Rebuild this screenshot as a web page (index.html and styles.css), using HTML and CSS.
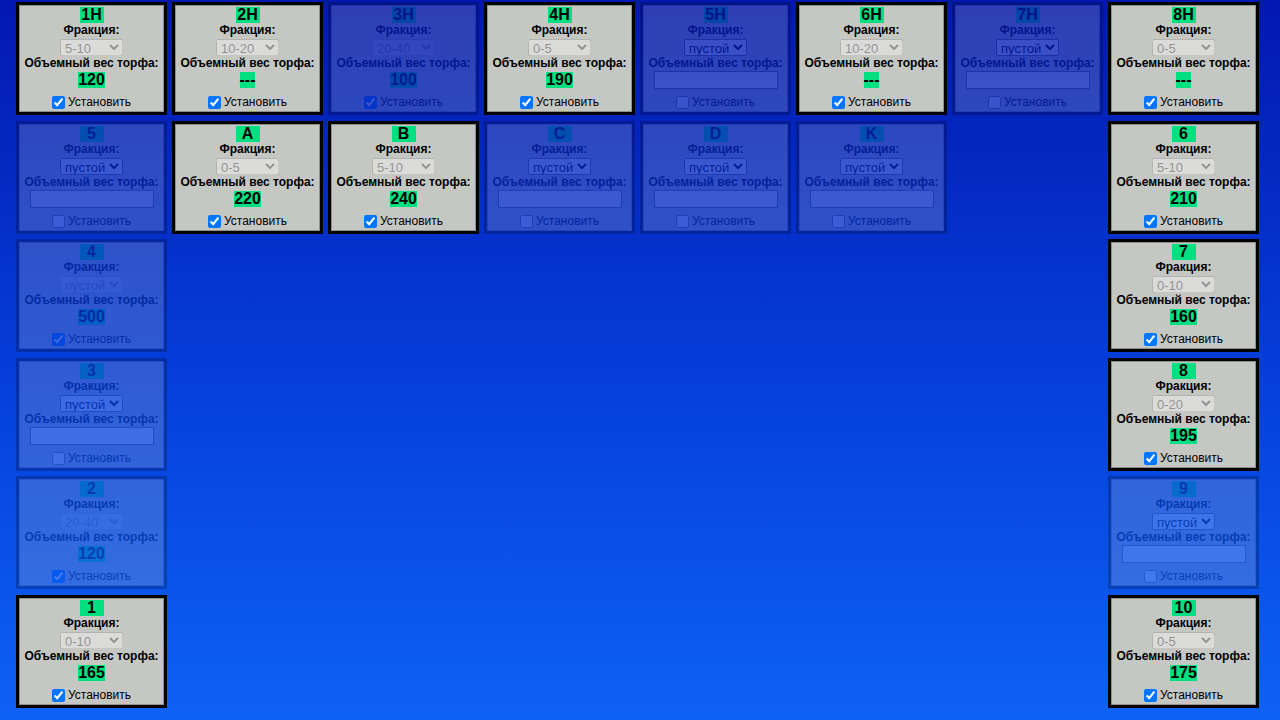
FILE: index.html
```html
<!DOCTYPE html>
<html lang="ru">
<head>
<meta charset="utf-8">
<title>Склад торфа</title>
<link rel="stylesheet" href="styles.css">
</head>
<body>
<main class="board">
  <!-- row 1 -->
  <div class="card"><div class="title">1H</div><div class="lbl">Фракция:</div>
    <select disabled><option>пустой</option><option>0-5</option><option>0-10</option><option selected>5-10</option><option>10-20</option><option>0-20</option><option>20-40</option></select>
    <div class="lbl lbl2">Объемный вес торфа:</div><div class="val">120</div>
    <label class="chk"><input type="checkbox" checked>Установить</label></div>

  <div class="card"><div class="title">2H</div><div class="lbl">Фракция:</div>
    <select disabled><option>пустой</option><option>0-5</option><option>0-10</option><option>5-10</option><option selected>10-20</option><option>0-20</option><option>20-40</option></select>
    <div class="lbl lbl2">Объемный вес торфа:</div><div class="val">---</div>
    <label class="chk"><input type="checkbox" checked>Установить</label></div>

  <div class="card dim"><div class="title">3H</div><div class="lbl">Фракция:</div>
    <select disabled><option>пустой</option><option>0-5</option><option>0-10</option><option>5-10</option><option>10-20</option><option>0-20</option><option selected>20-40</option></select>
    <div class="lbl lbl2">Объемный вес торфа:</div><div class="val">100</div>
    <label class="chk"><input type="checkbox" checked>Установить</label></div>

  <div class="card"><div class="title">4H</div><div class="lbl">Фракция:</div>
    <select disabled><option>пустой</option><option selected>0-5</option><option>0-10</option><option>5-10</option><option>10-20</option><option>0-20</option><option>20-40</option></select>
    <div class="lbl lbl2">Объемный вес торфа:</div><div class="val">190</div>
    <label class="chk"><input type="checkbox" checked>Установить</label></div>

  <div class="card dim"><div class="title">5H</div><div class="lbl">Фракция:</div>
    <select class="open"><option selected>пустой</option><option>0-5</option><option>0-10</option><option>5-10</option><option>10-20</option><option>0-20</option><option>20-40</option></select>
    <div class="lbl lbl2">Объемный вес торфа:</div><input class="field" type="text">
    <label class="chk"><input type="checkbox">Установить</label></div>

  <div class="card"><div class="title">6H</div><div class="lbl">Фракция:</div>
    <select disabled><option>пустой</option><option>0-5</option><option>0-10</option><option>5-10</option><option selected>10-20</option><option>0-20</option><option>20-40</option></select>
    <div class="lbl lbl2">Объемный вес торфа:</div><div class="val">---</div>
    <label class="chk"><input type="checkbox" checked>Установить</label></div>

  <div class="card dim"><div class="title">7H</div><div class="lbl">Фракция:</div>
    <select class="open"><option selected>пустой</option><option>0-5</option><option>0-10</option><option>5-10</option><option>10-20</option><option>0-20</option><option>20-40</option></select>
    <div class="lbl lbl2">Объемный вес торфа:</div><input class="field" type="text">
    <label class="chk"><input type="checkbox">Установить</label></div>

  <div class="card"><div class="title">8H</div><div class="lbl">Фракция:</div>
    <select disabled><option>пустой</option><option selected>0-5</option><option>0-10</option><option>5-10</option><option>10-20</option><option>0-20</option><option>20-40</option></select>
    <div class="lbl lbl2">Объемный вес торфа:</div><div class="val">---</div>
    <label class="chk"><input type="checkbox" checked>Установить</label></div>

  <!-- row 2 -->
  <div class="card dim left"><div class="title">5</div><div class="lbl">Фракция:</div>
    <select class="open"><option selected>пустой</option><option>0-5</option><option>0-10</option><option>5-10</option><option>10-20</option><option>0-20</option><option>20-40</option></select>
    <div class="lbl lbl2">Объемный вес торфа:</div><input class="field" type="text">
    <label class="chk"><input type="checkbox">Установить</label></div>

  <div class="card"><div class="title">A</div><div class="lbl">Фракция:</div>
    <select disabled><option>пустой</option><option selected>0-5</option><option>0-10</option><option>5-10</option><option>10-20</option><option>0-20</option><option>20-40</option></select>
    <div class="lbl lbl2">Объемный вес торфа:</div><div class="val">220</div>
    <label class="chk"><input type="checkbox" checked>Установить</label></div>

  <div class="card"><div class="title">B</div><div class="lbl">Фракция:</div>
    <select disabled><option>пустой</option><option>0-5</option><option>0-10</option><option selected>5-10</option><option>10-20</option><option>0-20</option><option>20-40</option></select>
    <div class="lbl lbl2">Объемный вес торфа:</div><div class="val">240</div>
    <label class="chk"><input type="checkbox" checked>Установить</label></div>

  <div class="card dim"><div class="title">C</div><div class="lbl">Фракция:</div>
    <select class="open"><option selected>пустой</option><option>0-5</option><option>0-10</option><option>5-10</option><option>10-20</option><option>0-20</option><option>20-40</option></select>
    <div class="lbl lbl2">Объемный вес торфа:</div><input class="field" type="text">
    <label class="chk"><input type="checkbox">Установить</label></div>

  <div class="card dim"><div class="title">D</div><div class="lbl">Фракция:</div>
    <select class="open"><option selected>пустой</option><option>0-5</option><option>0-10</option><option>5-10</option><option>10-20</option><option>0-20</option><option>20-40</option></select>
    <div class="lbl lbl2">Объемный вес торфа:</div><input class="field" type="text">
    <label class="chk"><input type="checkbox">Установить</label></div>

  <div class="card dim"><div class="title">K</div><div class="lbl">Фракция:</div>
    <select class="open"><option selected>пустой</option><option>0-5</option><option>0-10</option><option>5-10</option><option>10-20</option><option>0-20</option><option>20-40</option></select>
    <div class="lbl lbl2">Объемный вес торфа:</div><input class="field" type="text">
    <label class="chk"><input type="checkbox">Установить</label></div>

  <div class="card right"><div class="title">6</div><div class="lbl">Фракция:</div>
    <select disabled><option>пустой</option><option>0-5</option><option>0-10</option><option selected>5-10</option><option>10-20</option><option>0-20</option><option>20-40</option></select>
    <div class="lbl lbl2">Объемный вес торфа:</div><div class="val">210</div>
    <label class="chk"><input type="checkbox" checked>Установить</label></div>

  <!-- row 3 -->
  <div class="card dim left"><div class="title">4</div><div class="lbl">Фракция:</div>
    <select disabled><option selected>пустой</option><option>0-5</option><option>0-10</option><option>5-10</option><option>10-20</option><option>0-20</option><option>20-40</option></select>
    <div class="lbl lbl2">Объемный вес торфа:</div><div class="val">500</div>
    <label class="chk"><input type="checkbox" checked>Установить</label></div>

  <div class="card right"><div class="title">7</div><div class="lbl">Фракция:</div>
    <select disabled><option>пустой</option><option>0-5</option><option selected>0-10</option><option>5-10</option><option>10-20</option><option>0-20</option><option>20-40</option></select>
    <div class="lbl lbl2">Объемный вес торфа:</div><div class="val">160</div>
    <label class="chk"><input type="checkbox" checked>Установить</label></div>

  <!-- row 4 -->
  <div class="card dim left"><div class="title">3</div><div class="lbl">Фракция:</div>
    <select class="open"><option selected>пустой</option><option>0-5</option><option>0-10</option><option>5-10</option><option>10-20</option><option>0-20</option><option>20-40</option></select>
    <div class="lbl lbl2">Объемный вес торфа:</div><input class="field" type="text">
    <label class="chk"><input type="checkbox">Установить</label></div>

  <div class="card right"><div class="title">8</div><div class="lbl">Фракция:</div>
    <select disabled><option>пустой</option><option>0-5</option><option>0-10</option><option>5-10</option><option>10-20</option><option selected>0-20</option><option>20-40</option></select>
    <div class="lbl lbl2">Объемный вес торфа:</div><div class="val">195</div>
    <label class="chk"><input type="checkbox" checked>Установить</label></div>

  <!-- row 5 -->
  <div class="card dim left"><div class="title">2</div><div class="lbl">Фракция:</div>
    <select disabled><option>пустой</option><option>0-5</option><option>0-10</option><option>5-10</option><option>10-20</option><option>0-20</option><option selected>20-40</option></select>
    <div class="lbl lbl2">Объемный вес торфа:</div><div class="val">120</div>
    <label class="chk"><input type="checkbox" checked>Установить</label></div>

  <div class="card dim right"><div class="title">9</div><div class="lbl">Фракция:</div>
    <select class="open"><option selected>пустой</option><option>0-5</option><option>0-10</option><option>5-10</option><option>10-20</option><option>0-20</option><option>20-40</option></select>
    <div class="lbl lbl2">Объемный вес торфа:</div><input class="field" type="text">
    <label class="chk"><input type="checkbox">Установить</label></div>

  <!-- row 6 -->
  <div class="card left"><div class="title">1</div><div class="lbl">Фракция:</div>
    <select disabled><option>пустой</option><option>0-5</option><option selected>0-10</option><option>5-10</option><option>10-20</option><option>0-20</option><option>20-40</option></select>
    <div class="lbl lbl2">Объемный вес торфа:</div><div class="val">165</div>
    <label class="chk"><input type="checkbox" checked>Установить</label></div>

  <div class="card right"><div class="title">10</div><div class="lbl">Фракция:</div>
    <select disabled><option>пустой</option><option selected>0-5</option><option>0-10</option><option>5-10</option><option>10-20</option><option>0-20</option><option>20-40</option></select>
    <div class="lbl lbl2">Объемный вес торфа:</div><div class="val">175</div>
    <label class="chk"><input type="checkbox" checked>Установить</label></div>
</main>
</body>
</html>
```
FILE: styles.css
```css
html, body {
  margin: 0;
  height: 720px;
  overflow: hidden;
}
body {
  background: linear-gradient(to bottom, #0318b0 0%, #0640dc 55%, #0e62f4 100%);
  font-family: "Liberation Sans", Arial, sans-serif;
  color: #000;
}
.board {
  display: grid;
  grid-template-columns: repeat(8, 151px);
  grid-auto-rows: 113px;
  column-gap: 5px;
  row-gap: 5.6px;
  padding: 2px 0 0 16px;
}
.card {
  box-sizing: border-box;
  height: 113px;
  background: #c5c7c3;
  border: 3px solid #000;
  box-shadow: inset 0 0 0 1px #8e908c;
  display: flex;
  flex-direction: column;
  align-items: center;
  padding-top: 2px;
}
.card.dim { opacity: 0.22; }
.left { grid-column: 1; }
.right { grid-column: 8; }
.title {
  min-width: 24px;
  text-align: center;
  background: #00e080;
  font-weight: bold;
  font-size: 16px;
  line-height: 16px;
}
.lbl {
  font-weight: bold;
  font-size: 12px;
  line-height: 15px;
}
.lbl2 {
  line-height: 14px;
}
select {
  font-family: "Liberation Sans", Arial, sans-serif;
  font-size: 13px;
  height: 17px;
  margin-top: 1px;
  padding: 0;
}
.val {
  margin-top: 2px;
  font-weight: bold;
  font-size: 16px;
  line-height: 16px;
  background: #00e080;
}
.field {
  box-sizing: border-box;
  width: 124px;
  height: 18px;
  margin: 1px 0 0;
  padding: 0 2px;
  border: 1px solid #767676;
  background: #fff;
  font-size: 13px;
}
.chk {
  margin-top: 7px;
  font-size: 12px;
  line-height: 15px;
  display: flex;
  align-items: center;
}
.chk input {
  width: 13px;
  height: 13px;
  margin: 0 3px 0 0;
}
.field + .chk { margin-top: 6px; }
```
